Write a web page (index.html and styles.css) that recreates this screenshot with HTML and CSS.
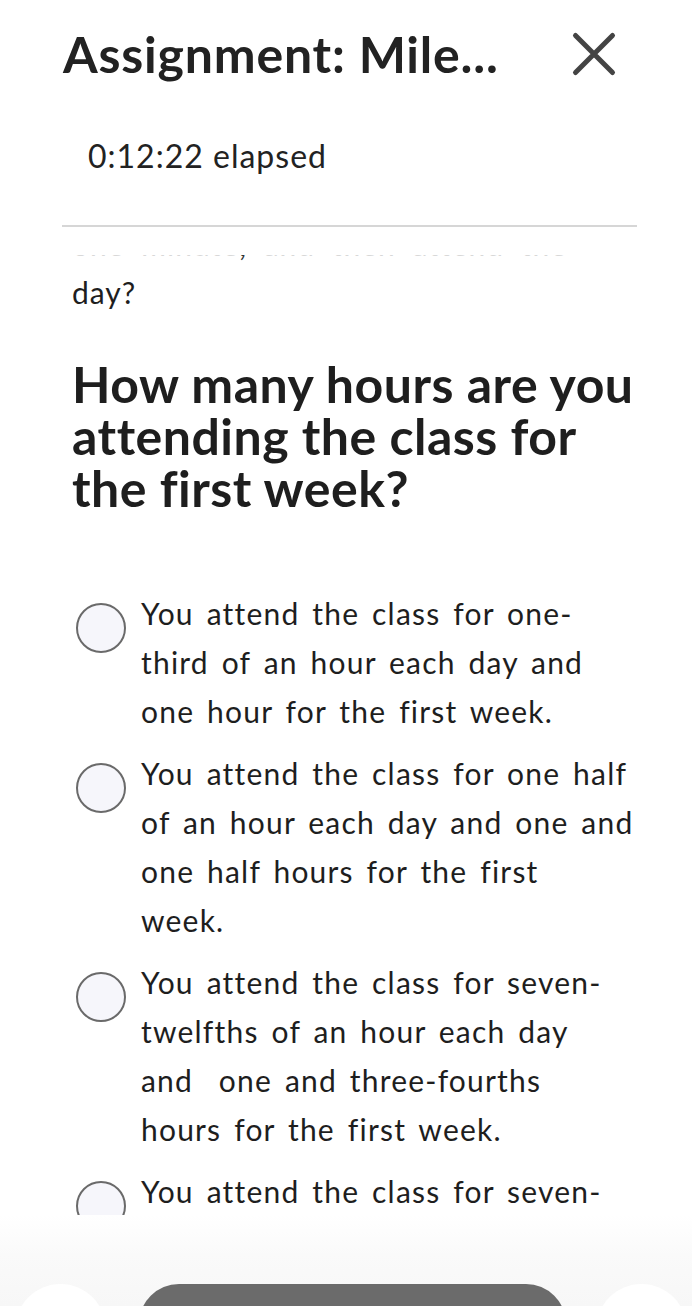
FILE: index.html
```html
<!DOCTYPE html>
<html>
<head>
<meta charset="utf-8">
<link rel="stylesheet" href="styles.css">
</head>
<body>
<div class="page">
  <header class="top">
    <h1 class="title">Assignment: Mile...</h1>
    <svg class="close" width="48" height="48" viewBox="0 0 48 48" aria-label="Close">
      <path d="M5.5 5.5 L42.5 42.5 M42.5 5.5 L5.5 42.5" stroke="#444" stroke-width="5" stroke-linecap="round" fill="none"/>
    </svg>
  </header>
  <div class="timer">0:12:22 elapsed</div>
  <hr class="rule">
  <div class="scroll">
    <div class="clipped"><span class="clip-text">one minute<span class="clip-comma">,</span> and then attend the</span></div>
    <p class="tail">day?</p>
    <h2 class="question">How many hours are you attending the class for the first week?</h2>
    <ul class="options">
      <li class="option"><span class="radio"></span><span class="label">You attend the class for one-third of an hour each day and one hour for the first week.</span></li>
      <li class="option"><span class="radio"></span><span class="label">You attend the class for one half of an hour each day and one and one half hours for the first<br>week.</span></li>
      <li class="option"><span class="radio"></span><span class="label">You attend the class for seven-twelfths of an hour each day and&nbsp; one and three-fourths<br>hours for the first week.</span></li>
      <li class="option"><span class="radio"></span><span class="label">You attend the class for seven-twelfths of an hour each day and two hours for the first week.</span></li>
    </ul>
  </div>
  <footer class="bottom">
    <span class="round left"></span>
    <span class="button"></span>
    <span class="round right"></span>
  </footer>
</div>
</body>
</html>
```
FILE: styles.css
```css
* { box-sizing: border-box; }
html, body { margin: 0; padding: 0; background: #fff; }
body { font-family: Lato, "Noto Sans", sans-serif; color: #1e1e1e; font-variant-ligatures: none; }
.page { width: 692px; height: 1306px; overflow: hidden; display: flex; flex-direction: column; }
.top { display: flex; align-items: center; justify-content: space-between; padding: 24px 74px 0 63px; }
.title { margin: 0; font-size: 50px; font-weight: 700; line-height: 60px; color: #222; letter-spacing: 0.8px; white-space: nowrap; }
.close { display: block; flex: none; }
.timer { margin: 52px 0 0 88px; font-size: 32px; line-height: 40px; color: #222; letter-spacing: 1px; }
.rule { margin: 49px 55px 0 62px; border: 0; border-top: 2px solid #d6d6d6; height: 0; }
.scroll { height: 988px; overflow: hidden; padding: 0 0 0 72px; flex: none; }
.clipped { height: 9px; margin-top: 28px; overflow: hidden; }
.clip-text { display: block; font-size: 30px; line-height: 40px; margin-top: -31px; color: #d8d8d8; letter-spacing: 1px; word-spacing: 8px; white-space: nowrap; }
.clip-comma { color: #333; }
.tail { margin: 8px 0 0 0; font-size: 30px; line-height: 40px; letter-spacing: 1px; }
.question { margin: 46px 40px 0 0; font-size: 50px; font-weight: 700; line-height: 52px; color: #1e1e1e; letter-spacing: 0.5px; }
.options { list-style: none; margin: 75px 0 0 4px; padding: 0; display: flex; flex-direction: column; gap: 13px; }
.option { display: flex; align-items: flex-start; gap: 15px; }
.radio { flex: none; width: 50px; height: 50px; border-radius: 50%; border: 2.5px solid #6a6a6a; background: #f6f6fb; margin-top: 14px; }
.label { font-size: 30px; line-height: 49px; width: 494px; color: #1e1e1e; letter-spacing: 1.2px; word-spacing: 4px; }
.bottom { flex: 1; background: linear-gradient(#fff 0, #fafafa 40px, #f3f3f3 100%); display: flex; align-items: flex-start; padding: 69px 0 0 15px; }
.round { flex: none; width: 91px; height: 91px; border-radius: 50%; background: #fff; }
.button { flex: none; width: 427px; height: 80px; border-radius: 40px; background: #6b6b6b; margin: 0 30px 0 33px; }
```
